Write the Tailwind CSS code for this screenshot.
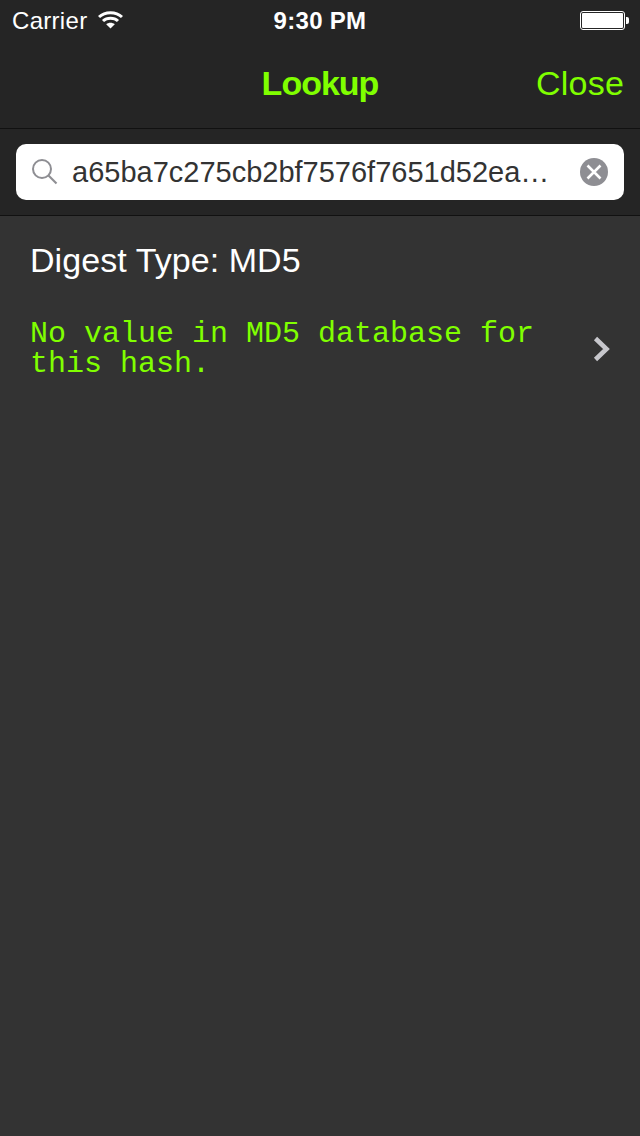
<!DOCTYPE html>
<html>
<head>
<meta charset="utf-8">
<script src="https://cdn.jsdelivr.net/npm/@tailwindcss/browser@4"></script>
</head>
<body class="m-0">
<div class="w-[640px] h-[1136px] bg-[#333333] flex flex-col overflow-hidden font-['Liberation_Sans',sans-serif]">
  <header class="bg-[#252525] h-[129px] border-b border-[#111111] flex flex-col shrink-0">
    <div class="h-[42px] relative flex items-center justify-between pl-[12px] pr-[11px] text-white text-[24px]">
      <div class="flex items-center gap-[11px]">
        <span class="tracking-[0.3px]">Carrier</span>
        <svg width="25" height="19" viewBox="0 0 25 19" fill="none" class="mb-[3px]">
          <path d="M1 7C7 1.2 18 1.2 24 7" stroke="#fff" stroke-width="3"/>
          <path d="M5 11C9 7.2 16 7.2 20 11" stroke="#fff" stroke-width="3"/>
          <path d="M12.5 18.5L8.2 14.2C10.6 12.2 14.4 12.2 16.8 14.2Z" fill="#fff"/>
        </svg>
      </div>
      <span class="absolute left-0 right-0 text-center font-bold tracking-[0.3px]">9:30 PM</span>
      <div class="flex items-center mb-[2px]">
        <div class="w-[45px] h-[19px] rounded-[3px] border border-white p-[1px]"><div class="w-full h-full bg-white rounded-[1px]"></div></div>
        <div class="w-[3px] h-[7px] bg-white rounded-r-[2px] ml-[1px]"></div>
      </div>
    </div>
    <div class="flex-1 relative flex items-center justify-end pr-[16px] text-[#80ff00] text-[34px] pb-[4px]">
      <span class="absolute left-0 right-0 text-center font-bold tracking-[-1px]">Lookup</span>
      <span class="tracking-[0.2px]">Close</span>
    </div>
  </header>
  <div class="bg-[#252525] h-[87px] border-b border-[#111111] px-[16px] pt-[15px] shrink-0">
    <div class="h-[56px] bg-white rounded-[10px] flex items-center pl-[16px] pr-[16px]">
      <svg width="26" height="26" viewBox="0 0 26 26" fill="none" class="shrink-0">
        <circle cx="10" cy="10" r="9" stroke="#8e8e93" stroke-width="2"/>
        <path d="M16.5 16.5L24.5 24.5" stroke="#8e8e93" stroke-width="2.2"/>
      </svg>
      <span class="ml-[14px] flex-1 text-[#333333] text-[29px] whitespace-nowrap pt-[1px]">a65ba7c275cb2bf7576f7651d52ea…</span>
      <svg width="28" height="28" viewBox="0 0 28 28" class="shrink-0">
        <circle cx="14" cy="14" r="14" fill="#8e8e93"/>
        <path d="M7.5 7.5L20.5 20.5M20.5 7.5L7.5 20.5" stroke="#fff" stroke-width="2.6"/>
      </svg>
    </div>
  </div>
  <main class="flex-1">
    <div class="pl-[30px] pt-[24px] text-white text-[34px] leading-[40px] tracking-[0.07px]">Digest Type: MD5</div>
    <div class="flex items-center justify-between pl-[30px] pr-[29px] mt-[39px]">
      <p class="text-[#80ff00] text-[30px] leading-[30px] font-['Liberation_Mono',monospace] w-[540px] m-0">No value in MD5 database for this hash.</p>
      <svg width="18" height="26" viewBox="0 0 18 26" fill="none" class="shrink-0">
        <path d="M2.5 2.5L13.5 13L2.5 23.5" stroke="#c7c7cc" stroke-width="4.6"/>
      </svg>
    </div>
  </main>
</div>
</body>
</html>
